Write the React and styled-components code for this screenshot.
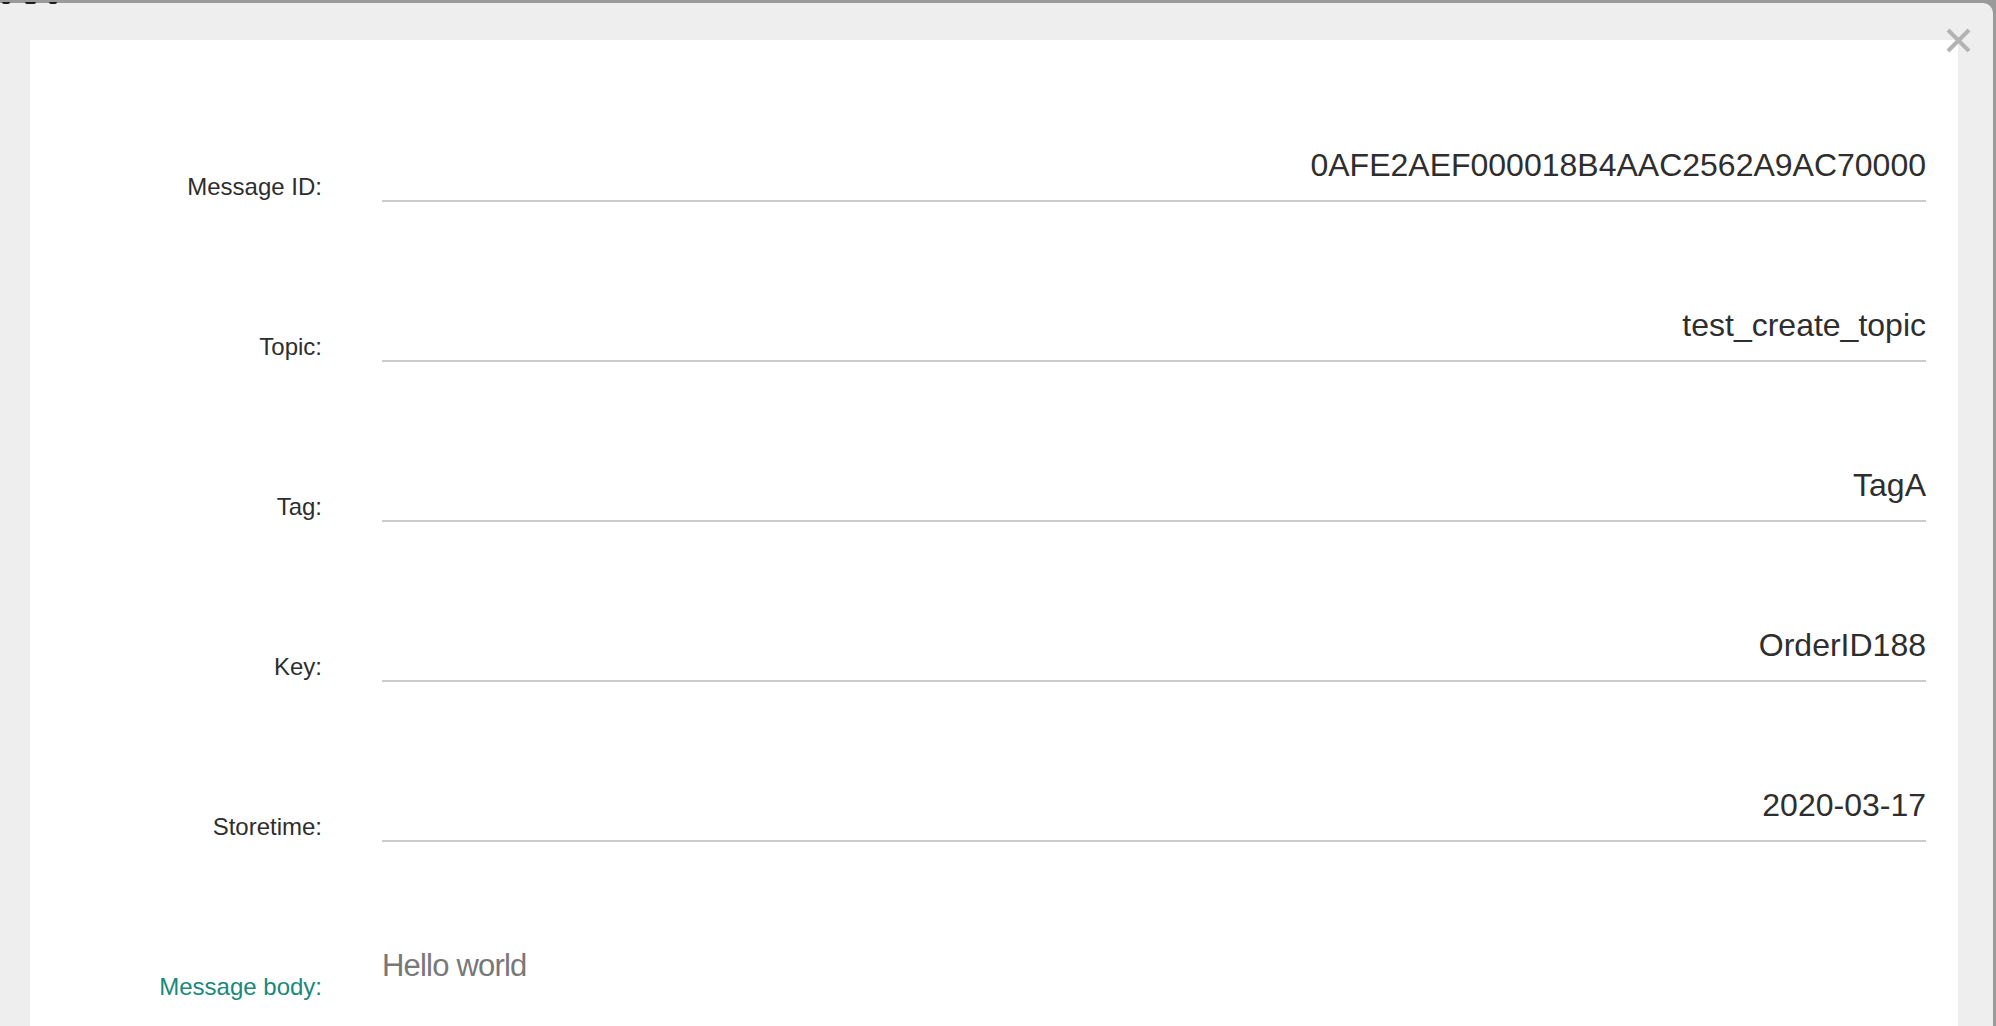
import React from "react";
import styled, { createGlobalStyle } from "styled-components";

const GlobalStyle = createGlobalStyle`
  html, body {
    margin: 0;
    padding: 0;
    background: #9a9a9a;
    font-family: "Liberation Sans", Arial, sans-serif;
    overflow: hidden;
  }
`;

const Page = styled.div`
  height: 100vh;
  display: flex;
  flex-direction: column;
`;

const TopBar = styled.div`
  height: 3px;
  flex: none;
  position: relative;
  display: flex;
  align-items: flex-end;
`;

const Mark = styled.span`
  position: absolute;
  left: ${(p) => p.left}px;
  bottom: -1px;
  width: ${(p) => p.width}px;
  height: 2px;
  background: #1c1c1c;
  border-radius: 0 0 3px 3px;
  z-index: 2;
`;

const Frame = styled.div`
  position: relative;
  flex: 1;
  margin-right: 3px;
  background: #eeeeee;
  border-top-right-radius: 10px;
  padding: 37px 35px 0 30px;
  display: flex;
  flex-direction: column;
  min-height: 0;
`;

const CloseButton = styled.button`
  position: absolute;
  top: 25px;
  right: 22px;
  width: 25px;
  height: 25px;
  padding: 0;
  border: none;
  background: none;
  cursor: pointer;
`;

const Card = styled.div`
  flex: 1;
  background: #ffffff;
  padding: 2px 32px 0 0;
  overflow: hidden;
`;

const Row = styled.div`
  display: grid;
  grid-template-columns: 292px 1fr;
  column-gap: 60px;
  height: 160px;
  align-items: end;
`;

const BodyRow = styled(Row)`
  align-items: start;
`;

const Label = styled.div`
  text-align: right;
  font-size: 24px;
  line-height: 24px;
  color: ${(p) => (p.accent ? "#17897b" : "#2e2e2e")};
  margin-top: ${(p) => (p.accent ? "133px" : "0")};
  padding-bottom: ${(p) => (p.accent ? "0" : "3px")};
`;

const Field = styled.div`
  text-align: right;
  font-size: 32px;
  line-height: 32px;
  color: #2e2e2e;
  padding-bottom: 19px;
  border-bottom: 2px solid #cccccc;
  white-space: nowrap;
`;

const BodyText = styled.div`
  margin-top: 108px;
  font-size: 31px;
  line-height: 31px;
  letter-spacing: -0.8px;
  color: #787878;
`;

const fields = [
  ["Message ID:", "0AFE2AEF000018B4AAC2562A9AC70000"],
  ["Topic:", "test_create_topic"],
  ["Tag:", "TagA"],
  ["Key:", "OrderID188"],
  ["Storetime:", "2020-03-17"],
];

const CloseIcon = () => (
  <svg width="25" height="25" viewBox="0 0 25 25">
    <path d="M2 2 L23 23 M23 2 L2 23" stroke="#b3b3b3" strokeWidth="4" />
  </svg>
);

const App = () => {
  return (
    <Page>
      <GlobalStyle />
      <TopBar>
        <Mark left={2} width={8} />
        <Mark left={25} width={11} />
        <Mark left={49} width={8} />
      </TopBar>
      <Frame>
        <CloseButton aria-label="close">
          <CloseIcon />
        </CloseButton>
        <Card>
          {fields.map(([label, value]) => (
            <Row key={label}>
              <Label>{label}</Label>
              <Field>{value}</Field>
            </Row>
          ))}
          <BodyRow>
            <Label accent>Message body:</Label>
            <BodyText>Hello world</BodyText>
          </BodyRow>
        </Card>
      </Frame>
    </Page>
  );
};

export default App;
